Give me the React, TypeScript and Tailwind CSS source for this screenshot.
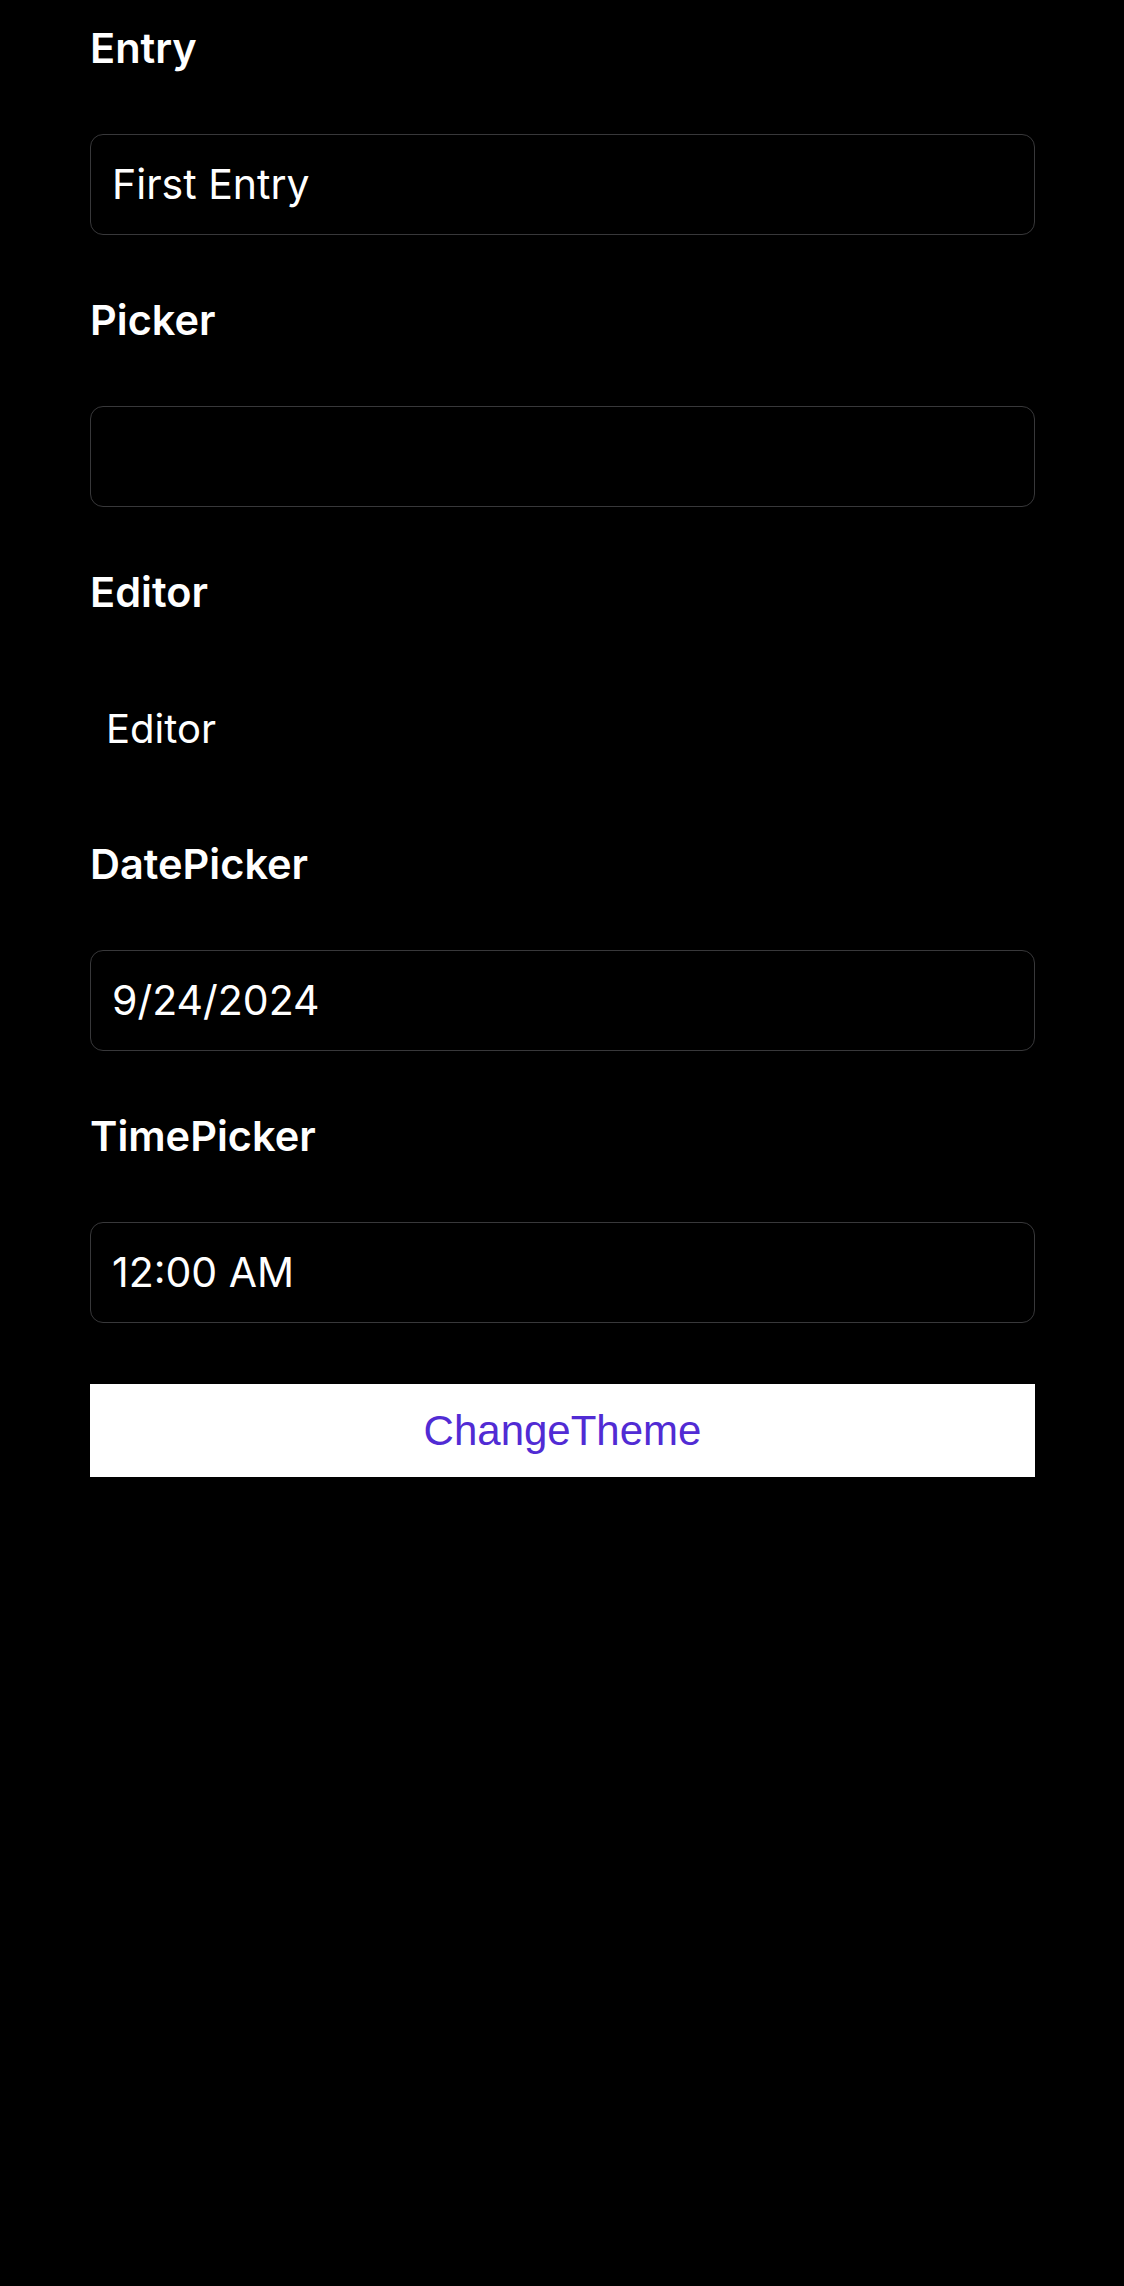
const fields = [
  { label: "Entry", kind: "box", value: "First Entry" },
  { label: "Picker", kind: "box", value: "" },
  { label: "Editor", kind: "editor", value: "Editor" },
  { label: "DatePicker", kind: "box", value: "9/24/2024" },
  { label: "TimePicker", kind: "box", value: "12:00 AM" },
];

const App = () => {
  return (
    <div className="min-h-[2286px] bg-black text-white font-['Inter',sans-serif]">
      <div className="pl-[90px] pr-[89px] pt-[27px]">
        {fields.map((f) => (
          <div key={f.label} className="mb-[64px]">
            <div className="h-[42px] mb-[65px] text-[41.5px] leading-[42px] font-semibold">
              {f.label}
            </div>

            {f.kind === "box" ? (
              <div className="h-[101px] flex items-center rounded-[13px] border border-[#38383a] pl-[21px] text-[41px] leading-none">
                {f.value}
              </div>
            ) : (
              <div className="h-[101px] flex items-center pl-[16px] text-[40px] leading-none">
                {f.value}
              </div>
            )}
          </div>
        ))}

        {/* theme toggle */}
        <button className="-mt-[3px] w-full h-[93px] bg-white flex items-center justify-center font-['Liberation_Sans',Arial,sans-serif] text-[42px] leading-none text-[#512bd4]">
          ChangeTheme
        </button>
      </div>
    </div>
  );
};

export default App;
